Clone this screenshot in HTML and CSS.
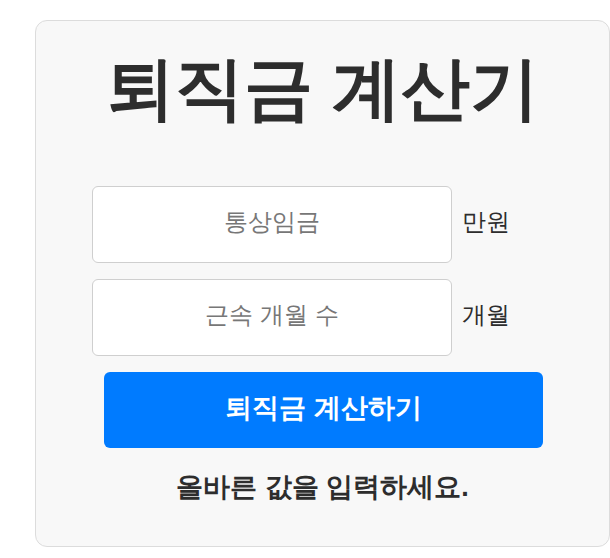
FILE: index.html
```html
<!DOCTYPE html>
<html lang="ko">
<head>
<meta charset="utf-8">
<link rel="stylesheet" href="styles.css">
</head>
<body>
<div class="card">
  <h1 class="title">퇴직금 계산기</h1>
  <div class="row">
    <input class="field" type="text" placeholder="통상임금">
    <span class="unit">만원</span>
  </div>
  <div class="row">
    <input class="field" type="text" placeholder="근속 개월 수">
    <span class="unit">개월</span>
  </div>
  <button class="btn">퇴직금 계산하기</button>
  <p class="result">올바른 값을 입력하세요.</p>
</div>
</body>
</html>
```
FILE: styles.css
```css
html, body {
  margin: 0;
  padding: 0;
  background: #fff;
}
body {
  font-family: "Liberation Sans", sans-serif;
  color: #333;
}
.card {
  box-sizing: border-box;
  width: 575px;
  height: 527px;
  margin: 20px 0 0 35px;
  background: #f8f8f8;
  border: 1px solid #dcdcdc;
  border-radius: 12px;
  padding-top: 24px;
}
.title {
  margin: 0 0 53px;
  text-align: center;
  font-size: 69px;
  line-height: 88px;
  font-weight: 700;
  color: #2d2d2d;
}
.row {
  display: flex;
  align-items: center;
  gap: 10px;
  margin: 0 0 16px 56px;
}
.field {
  box-sizing: border-box;
  width: 360px;
  height: 77px;
  padding: 0 0 5px;
  border: 1px solid #cfcfcf;
  border-radius: 6px;
  background: #fff;
  font-family: inherit;
  font-size: 24px;
  text-align: center;
  color: #333;
  outline: none;
}
.field::placeholder {
  color: #777;
}
.unit {
  padding-bottom: 5px;
  font-size: 24px;
  color: #2d2d2d;
}
.btn {
  display: block;
  box-sizing: border-box;
  width: 439px;
  height: 76px;
  margin: 0 0 0 68px;
  padding: 0 0 4px;
  border: none;
  border-radius: 6px;
  background: #007bff;
  color: #fff;
  font-family: inherit;
  font-size: 27px;
  font-weight: 700;
}
.result {
  margin: 21px 0 0;
  text-align: center;
  font-size: 27px;
  font-weight: 700;
  color: #2d2d2d;
}
```
